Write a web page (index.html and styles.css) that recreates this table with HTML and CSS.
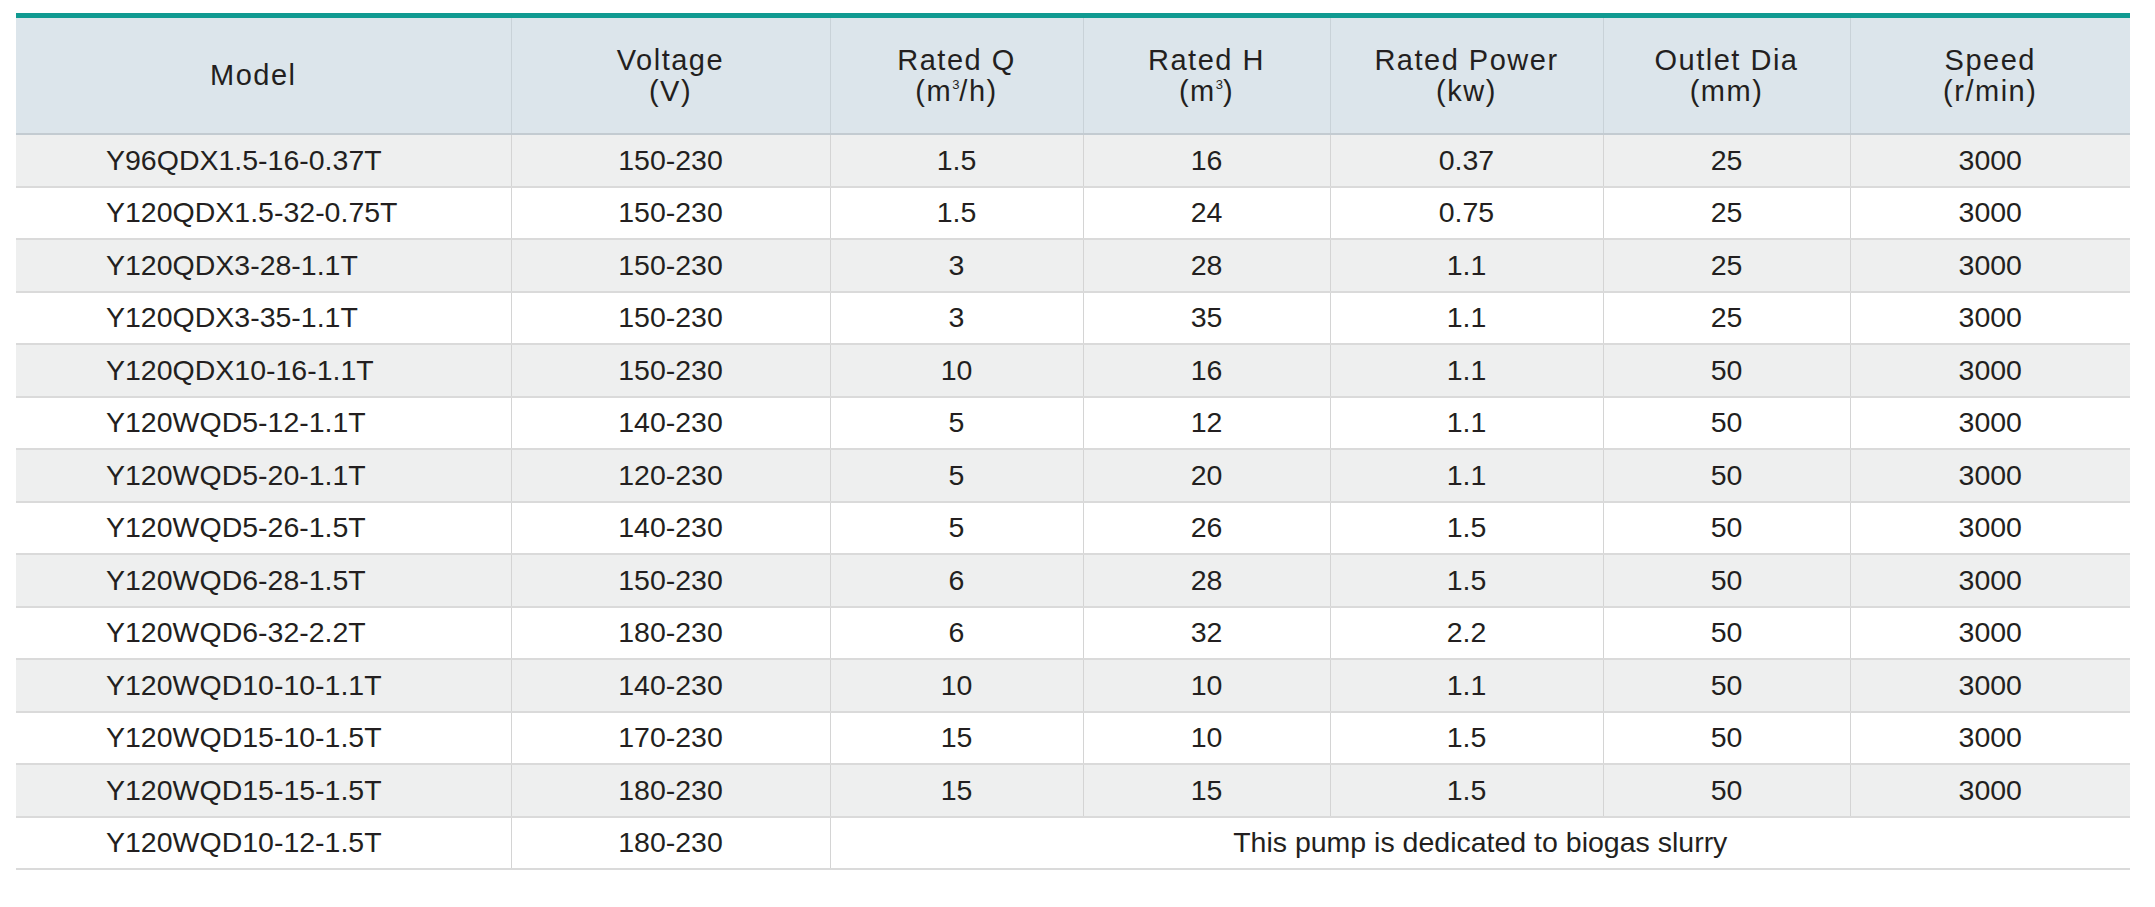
FILE: index.html
```html
<!DOCTYPE html>
<html>
<head>
<meta charset="utf-8">
<link rel="stylesheet" href="styles.css">
</head>
<body>
<div class="wrap">
<table class="spec">
  <colgroup>
    <col class="c-model"><col class="c-volt"><col class="c-q"><col class="c-h"><col class="c-pow"><col class="c-out"><col class="c-speed">
  </colgroup>
  <thead>
    <tr>
      <th class="h-model">Model</th>
      <th>Voltage<br>(V)</th>
      <th>Rated Q<br>(m<sup>3</sup>/h)</th>
      <th>Rated H<br>(m<sup>3</sup>)</th>
      <th>Rated Power<br>(kw)</th>
      <th>Outlet Dia<br>(mm)</th>
      <th>Speed<br>(r/min)</th>
    </tr>
  </thead>
  <tbody>
    <tr class="alt"><td class="model">Y96QDX1.5-16-0.37T</td><td>150-230</td><td>1.5</td><td>16</td><td>0.37</td><td>25</td><td>3000</td></tr>
    <tr><td class="model">Y120QDX1.5-32-0.75T</td><td>150-230</td><td>1.5</td><td>24</td><td>0.75</td><td>25</td><td>3000</td></tr>
    <tr class="alt"><td class="model">Y120QDX3-28-1.1T</td><td>150-230</td><td>3</td><td>28</td><td>1.1</td><td>25</td><td>3000</td></tr>
    <tr><td class="model">Y120QDX3-35-1.1T</td><td>150-230</td><td>3</td><td>35</td><td>1.1</td><td>25</td><td>3000</td></tr>
    <tr class="alt"><td class="model">Y120QDX10-16-1.1T</td><td>150-230</td><td>10</td><td>16</td><td>1.1</td><td>50</td><td>3000</td></tr>
    <tr><td class="model">Y120WQD5-12-1.1T</td><td>140-230</td><td>5</td><td>12</td><td>1.1</td><td>50</td><td>3000</td></tr>
    <tr class="alt"><td class="model">Y120WQD5-20-1.1T</td><td>120-230</td><td>5</td><td>20</td><td>1.1</td><td>50</td><td>3000</td></tr>
    <tr><td class="model">Y120WQD5-26-1.5T</td><td>140-230</td><td>5</td><td>26</td><td>1.5</td><td>50</td><td>3000</td></tr>
    <tr class="alt"><td class="model">Y120WQD6-28-1.5T</td><td>150-230</td><td>6</td><td>28</td><td>1.5</td><td>50</td><td>3000</td></tr>
    <tr><td class="model">Y120WQD6-32-2.2T</td><td>180-230</td><td>6</td><td>32</td><td>2.2</td><td>50</td><td>3000</td></tr>
    <tr class="alt"><td class="model">Y120WQD10-10-1.1T</td><td>140-230</td><td>10</td><td>10</td><td>1.1</td><td>50</td><td>3000</td></tr>
    <tr><td class="model">Y120WQD15-10-1.5T</td><td>170-230</td><td>15</td><td>10</td><td>1.5</td><td>50</td><td>3000</td></tr>
    <tr class="alt"><td class="model">Y120WQD15-15-1.5T</td><td>180-230</td><td>15</td><td>15</td><td>1.5</td><td>50</td><td>3000</td></tr>
    <tr><td class="model">Y120WQD10-12-1.5T</td><td>180-230</td><td colspan="5" class="note">This pump is dedicated to biogas slurry</td></tr>
  </tbody>
</table>
</div>
</body>
</html>
```
FILE: styles.css
```css
html, body {
  margin: 0;
  padding: 0;
  background: #ffffff;
}

.wrap {
  padding: 13px 25px 0 16px;
}

.spec {
  width: 2114px;
  border-collapse: collapse;
  table-layout: fixed;
  font-family: "Liberation Sans", Arial, sans-serif;
  color: #231f20;
  border-top: 5px solid #109a91;
}

.c-model { width: 495px; }
.c-volt { width: 319px; }
.c-q { width: 253px; }
.c-h { width: 247px; }
.c-pow { width: 273px; }
.c-out { width: 247px; }
.c-speed { width: 280px; }

.spec th {
  background: #dce5eb;
  height: 115px;
  padding: 0;
  font-weight: normal;
  font-size: 29px;
  line-height: 31px;
  letter-spacing: 1.5px;
  text-align: center;
  vertical-align: middle;
  border-left: 1px solid #c9d2d8;
  border-bottom: 2px solid #c3cbd1;
}

.spec th:first-child {
  border-left: none;
}

.spec th.h-model {
  padding-right: 20px;
}

.spec sup {
  font-size: 13px;
  line-height: 0;
  vertical-align: 12px;
  letter-spacing: 0;
}

.spec td {
  height: 50.5px;
  padding: 0;
  font-size: 28.5px;
  text-align: center;
  vertical-align: middle;
  border-left: 1px solid #d4d4d4;
  border-bottom: 2px solid #dadada;
}

.spec td:first-child {
  border-left: none;
}

.spec td.model {
  text-align: left;
  padding-left: 90px;
}

.spec tr.alt td {
  background: #eeefef;
}
```
